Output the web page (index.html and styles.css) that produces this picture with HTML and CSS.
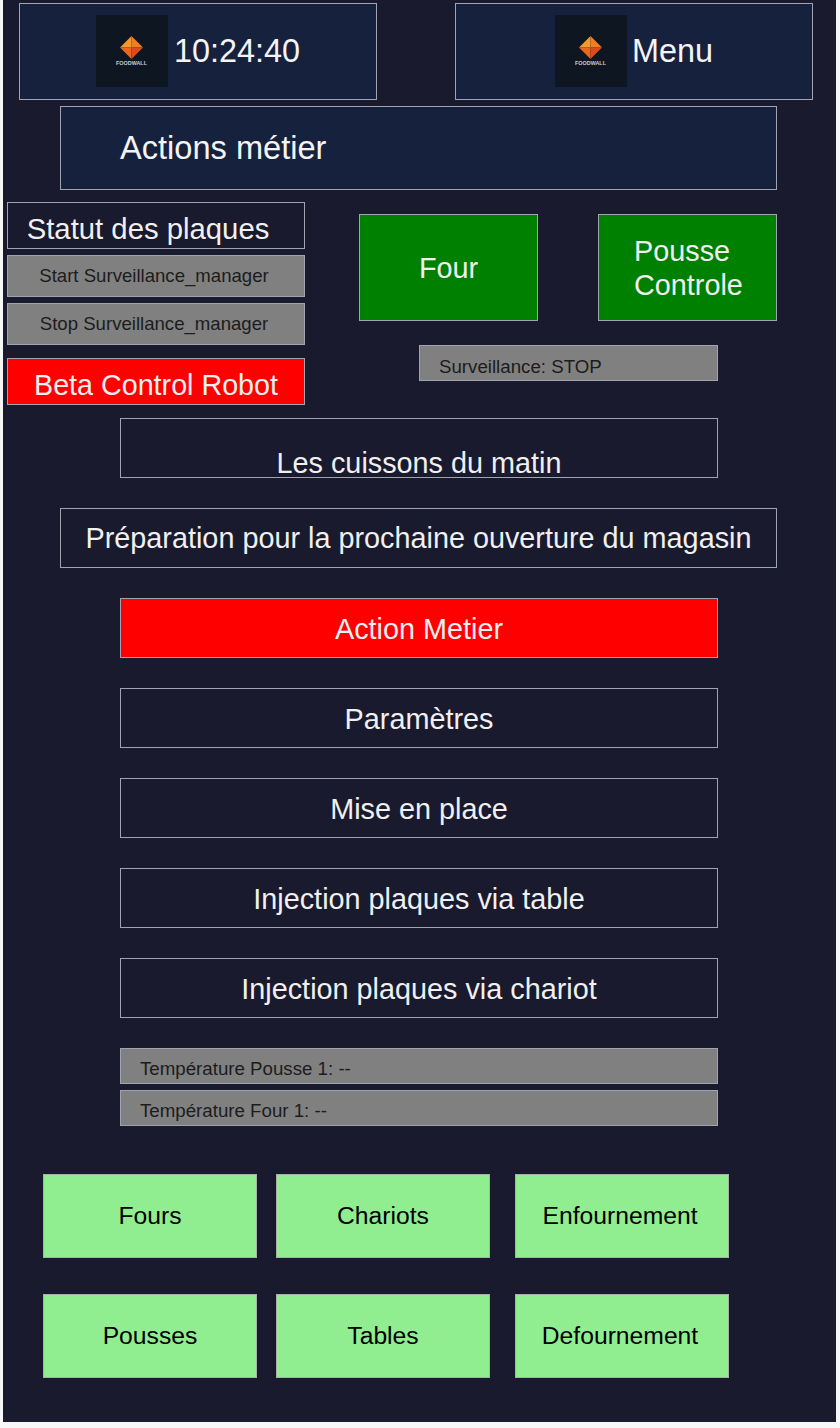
FILE: index.html
```html
<!DOCTYPE html>
<html lang="fr">
<head>
    <meta charset="UTF-8">
    <meta name="viewport" content="width=device-width, initial-scale=1.0">
    <link rel="stylesheet" href="styles.css">
</head>
<body>
    <div class="frame">
        <div class="top-row">
            <div class="top-box">
                <svg class="logo" viewBox="0 0 72 72">
                    <rect width="72" height="72" fill="#0e1622"/>
                    <polygon points="35.5,21 35.5,32.5 24,32.5" fill="#f4982a"/>
                    <polygon points="35.5,21 47,32.5 35.5,32.5" fill="#f07f22"/>
                    <polygon points="24,32.5 35.5,32.5 35.5,44" fill="#ec661e"/>
                    <polygon points="47,32.5 35.5,32.5 35.5,44" fill="#dc4c1a"/>
                    <text x="35.5" y="50" class="logo-text">FOODWALL</text>
                </svg>
                <span class="clock">10:24:40</span>
            </div>
            <div class="top-box">
                <svg class="logo" viewBox="0 0 72 72">
                    <rect width="72" height="72" fill="#0e1622"/>
                    <polygon points="35.5,21 35.5,32.5 24,32.5" fill="#f4982a"/>
                    <polygon points="35.5,21 47,32.5 35.5,32.5" fill="#f07f22"/>
                    <polygon points="24,32.5 35.5,32.5 35.5,44" fill="#ec661e"/>
                    <polygon points="47,32.5 35.5,32.5 35.5,44" fill="#dc4c1a"/>
                    <text x="35.5" y="50" class="logo-text">FOODWALL</text>
                </svg>
                <span class="clock">Menu</span>
            </div>
        </div>

        <div class="page-title">Actions métier</div>

        <div class="control-area">
            <div class="side">
                <button class="side-title">Statut des plaques</button>
                <button class="side-btn">Start Surveillance_manager</button>
                <button class="side-btn">Stop Surveillance_manager</button>
                <button class="beta-btn">Beta Control Robot</button>
            </div>
            <div class="plant">
                <div class="ovens">
                    <button class="oven-btn">Four</button>
                    <button class="oven-btn oven-left">Pousse<br>Controle</button>
                </div>
                <div class="status-bar surveillance">Surveillance: STOP</div>
            </div>
        </div>

        <div class="menu">
            <button class="menu-btn low-text">Les cuissons du matin</button>
            <button class="menu-btn wide">Préparation pour la prochaine ouverture du magasin</button>
            <button class="menu-btn red">Action Metier</button>
            <button class="menu-btn">Paramètres</button>
            <button class="menu-btn">Mise en place</button>
            <button class="menu-btn">Injection plaques via table</button>
            <button class="menu-btn">Injection plaques via chariot</button>
        </div>

        <div class="temps">
            <div class="status-bar">Température Pousse 1: --</div>
            <div class="status-bar">Température Four 1: --</div>
        </div>

        <div class="shortcuts">
            <button class="shortcut">Fours</button>
            <button class="shortcut">Chariots</button>
            <button class="shortcut">Enfournement</button>
            <button class="shortcut">Pousses</button>
            <button class="shortcut">Tables</button>
            <button class="shortcut">Defournement</button>
        </div>
    </div>
</body>
</html>
```

FILE: styles.css
```css
html, body {
    margin: 0;
    padding: 0;
    background: #f7f7f7;
}
body {
    font-family: "Liberation Sans", Arial, sans-serif;
    height: 1428px;
    overflow: hidden;
}
button {
    font-family: inherit;
    margin: 0;
    padding: 0;
    box-sizing: border-box;
    border: 1px solid #a0a3b0;
    color: #f0f0f0;
    background: transparent;
}
.frame {
    box-sizing: border-box;
    width: 833px;
    height: 1422px;
    margin-left: 3px;
    padding-top: 3px;
    background: #1a1a2e;
    display: flex;
    flex-direction: column;
}
.top-row {
    display: flex;
    gap: 78px;
    margin-left: 16px;
}
.top-box {
    box-sizing: border-box;
    width: 358px;
    height: 97px;
    border: 1px solid #a0a3b0;
    background: #16213e;
    display: flex;
    align-items: center;
    justify-content: center;
    gap: 6px;
}
.top-box:last-child {
    gap: 5px;
}
.logo {
    width: 72px;
    height: 72px;
    margin-top: -1px;
}
.logo-text {
    font-size: 5.4px;
    font-weight: bold;
    fill: #c9ccd2;
    text-anchor: middle;
}
.clock {
    font-size: 32.4px;
    color: #f4f4f4;
}
.page-title {
    box-sizing: border-box;
    width: 717px;
    height: 84px;
    margin: 6px 0 0 57px;
    padding: 0 0 0 59px;
    border: 1px solid #a0a3b0;
    background: #16213e;
    display: flex;
    align-items: center;
    font-size: 32.6px;
    color: #f4f4f4;
}
.control-area {
    display: flex;
    margin-top: 12px;
    margin-left: 4px;
}
.side {
    width: 298px;
    display: flex;
    flex-direction: column;
}
.side-title {
    height: 47px;
    padding: 7px 16px 0 0;
    font-size: 29.3px;
    margin-bottom: 6px;
}
.side-btn {
    height: 42px;
    padding-right: 4px;
    font-size: 18.6px;
    color: #1c1c1c;
    background: #808080;
    margin-bottom: 6px;
}
.beta-btn {
    height: 47px;
    margin-top: 7px;
    padding-top: 7px;
    font-size: 28.7px;
    background: #ff0000;
}
.plant {
    padding-top: 12px;
}
.ovens {
    display: flex;
    gap: 60px;
    margin-left: 54px;
}
.oven-btn {
    width: 179px;
    height: 107px;
    font-size: 28.8px;
    line-height: 34px;
    background: #008000;
}
.oven-left {
    text-align: left;
    padding-left: 35px;
}
.status-bar {
    box-sizing: border-box;
    height: 36px;
    width: 598px;
    padding: 5px 0 0 19px;
    background: #808080;
    border: 1px solid #a0a3b0;
    color: #1c1c1c;
    font-size: 18.7px;
    line-height: 30px;
    display: flex;
    align-items: center;
}
.surveillance {
    width: 299px;
    padding-top: 7px;
    margin: 24px 0 0 114px;
}
.menu {
    display: flex;
    flex-direction: column;
    align-items: center;
    gap: 30px;
    margin-top: 13px;
    padding-right: 1px;
}
.menu-btn {
    width: 598px;
    height: 60px;
    padding-top: 2px;
    font-size: 28.8px;
}
.menu-btn.wide {
    width: 717px;
    padding-top: 0;
    margin-right: 1px;
}
.menu-btn.red {
    background: #ff0000;
}
.menu-btn.low-text {
    padding-top: 28px;
}
.temps {
    display: flex;
    flex-direction: column;
    align-items: center;
    gap: 6px;
    margin-top: 30px;
    padding-right: 1px;
}
.shortcuts {
    display: grid;
    grid-template-columns: 214px 214px 220px;
    grid-auto-rows: 84px;
    column-gap: 19px;
    row-gap: 36px;
    margin: 48px 0 0 40px;
}
.shortcut {
    font-size: 24.7px;
    color: #000;
    background: #90ee90;
    border-color: #a8b0a8;
}
.shortcut:nth-child(3n) {
    margin-left: 6px;
    padding-right: 4px;
}
```
